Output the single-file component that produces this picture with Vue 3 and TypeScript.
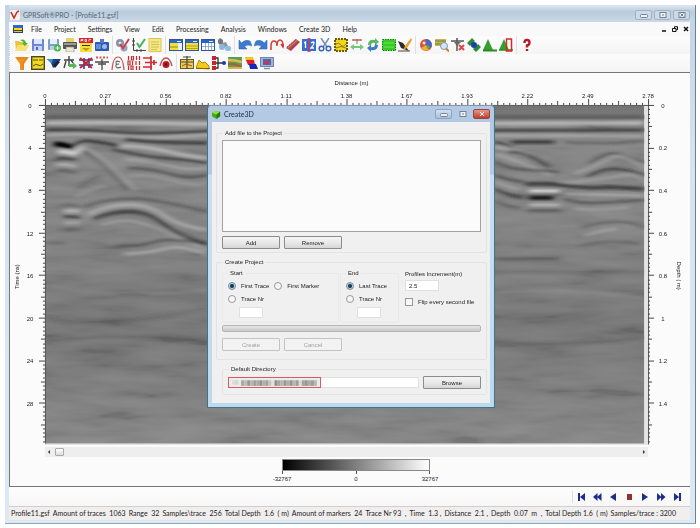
<script setup lang="ts">
import { ref } from 'vue'

interface Icon {
  name: string
  art: string
}

interface Echo {
  d: string
  w: number
  c: string
  o: number
}

const menus: string[] = ['File', 'Project', 'Settings', 'View', 'Edit', 'Processing', 'Analysis', 'Windows', 'Create 3D', 'Help']

const windowArt = (body: string): string =>
  `<rect x="0.5" y="1.5" width="13" height="11" fill="${body}" stroke="#2f5597"/><rect x="1" y="2" width="12" height="3" fill="#2b62c8"/><path d="M8 3.5h4" stroke="#dce8fb"/>`

const mainTools: Icon[][] = [
  [
    { name: 'Open', art: '<path d="M0 3h4l1 1h6v8H1z" fill="#e8c63c"/><path d="M3 7h11l-3 6H0z" fill="#f7e374"/><path d="M5 2q5-2 6 3h2l-3 3-3-3h2q-1-2-4-3z" fill="#4bb533"/>' },
    { name: 'Save', art: '<rect x="1" y="1" width="12" height="12" rx="1" fill="#6c86d6"/><rect x="3" y="1" width="8" height="5" fill="#dfe7fb"/><rect x="3" y="8" width="8" height="5" fill="#c9d4f4"/><rect x="5" y="9" width="2" height="3" fill="#4c65b4"/>' },
    { name: 'Save as', art: '<rect x="1" y="1" width="11" height="11" rx="1" fill="#7fa0c4"/><rect x="3" y="1" width="7" height="5" fill="#e7eff8"/><rect x="3" y="8" width="6" height="4" fill="#bccfe2"/><circle cx="10.5" cy="10" r="3.5" fill="#43b649"/><path d="M8.5 10h4M10.500 8v4" stroke="#fff"/>' },
    { name: 'Print', art: '<rect x="3" y="0" width="8" height="5" fill="#e7d36a"/><rect x="0" y="4" width="14" height="7" rx="1" fill="#555"/><rect x="1" y="5" width="12" height="2" fill="#999"/><rect x="3" y="9" width="8" height="5" fill="#e9e9d4" stroke="#777" stroke-width=".5"/>' },
    { name: 'Export PDF', art: '<rect x="1" y="4" width="12" height="10" fill="#f2df3a"/><rect x="0" y="0" width="14" height="5" fill="#d8232a"/><path d="M2 3.500V1.500h2v1h-2M6 1.500v2h1.500v-2zM10 3.500v-2h2" fill="none" stroke="#fff" stroke-width=".8"/><path d="M3 7.500h8" stroke="#333"/><path d="M3 10h8l-4 3z" fill="#c9971c"/>' },
    { name: 'Properties', art: '<rect x="0" y="4" width="14" height="9" rx="1" fill="#2d59b3"/><rect x="5" y="1" width="4" height="4" fill="#5379c7"/><rect x="1" y="6" width="5" height="5" fill="#5e8ce0"/><circle cx="9.500" cy="8.500" r="2.500" fill="#9fb9e9"/>' }
  ],
  [
    { name: 'Check settings', art: '<circle cx="4" cy="5" r="4" fill="#8592a8"/><circle cx="8" cy="10" r="3.500" fill="#9aa5b8"/><circle cx="4" cy="5" r="1.500" fill="#e7eaf0"/><path d="M4 6l3 4 6-9" fill="none" stroke="#c8404a" stroke-width="2"/>' },
    { name: 'Check axes', art: '<path d="M1.500 0v12.500H14M0 3h3M0 7h3M5 11v3M9 11v3" fill="none" stroke="#444"/><path d="M5 5l2.500 4L13 1" fill="none" stroke="#46b35a" stroke-width="2"/>' },
    { name: 'Notes', art: '<rect x="1" y="0.500" width="12" height="13" fill="#f4e984" stroke="#d8c64e"/><path d="M3 4h8M3 6.500h8M3 9h8M3 11.500h6" stroke="#c7b24a" stroke-width=".8"/>' }
  ],
  [
    { name: 'Profile window', art: windowArt('#f3df36') + '<rect x="9" y="5" width="4" height="7" fill="#e8eefb"/><path d="M1 9h8" stroke="#8a8a32"/>' },
    { name: 'Section window', art: windowArt('#f3df36') + '<path d="M1 8h12M1 10.500h12" stroke="#a18e1f" stroke-width=".8"/>' },
    { name: 'Table window', art: windowArt('#fff') + '<path d="M4.500 5v7M7.500 5v7M10.500 5v7M1 8.500h12" stroke="#7a9ad0" stroke-width=".8"/>' },
    { name: 'Batch', art: '<path d="M3 0l3 2v4l-3 1-2-2V2z" fill="#6f7881"/><path d="M5 5l4-1 2 4-4 2z" fill="#8c959e"/><circle cx="5" cy="9" r="3" fill="#8fb6d8"/><rect x="8" y="8" width="6" height="5" rx="2" fill="#86c0e6"/>' }
  ],
  [
    { name: 'Undo', art: '<path d="M1 2v9h8L6.500 8.500Q10 6 14 8L12 3Q7 1 3.500 5z" fill="#3c7bd0" stroke="#2a5da8" stroke-width=".5"/>' },
    { name: 'Redo', art: '<path d="M13 2v9H5l2.500-2.500Q4 6 0 8l2-5Q7 1 10.500 5z" fill="#3c7bd0" stroke="#2a5da8" stroke-width=".5"/>' },
    { name: 'Gain curve', art: '<path d="M1 12V8q0-5 3-5t3 5q0-6 3-6t3 6M11 6l2 3 1-3" fill="none" stroke="#d63a34" stroke-width="1.500"/>' },
    { name: 'Filter strip', art: '<path d="M0 10L10 1l4 3-9 9z" fill="#b8484a"/><path d="M2 10l9-7.500" stroke="#dba3a3" stroke-width=".8"/><path d="M4 12l9-8M1 9l9-8" stroke="#8a3032" stroke-width=".8" stroke-dasharray="1.500 1"/>' },
    { name: 'Renumber', art: '<rect x="0" y="1" width="14" height="12" fill="#2f6fd6"/><path d="M2 5l1.500-1v6M9 5q3-2 3 0T9 10h3" fill="none" stroke="#fff" stroke-width="1.300"/><path d="M7 0v14" stroke="#e5333b" stroke-width="1.500"/><path d="M5 0h4M5 14h4" stroke="#e5333b"/>' },
    { name: 'Cut', art: '<path d="M3 0l6 9M11 0L5 9" stroke="#7c93b8" stroke-width="1.600"/><circle cx="3.500" cy="10.500" r="2.300" fill="none" stroke="#3565bd" stroke-width="1.500"/><circle cx="10.500" cy="10.500" r="2.300" fill="none" stroke="#3565bd" stroke-width="1.500"/>' },
    { name: 'Crop profile', art: '<rect x="1" y="1" width="12" height="12" fill="#f0d818" stroke="#6b5b12" stroke-width="2" stroke-dasharray="2 1"/><path d="M2 6q3-2 5 1t5-1M2 10q5-3 10 0" fill="none" stroke="#8f7d10"/>' },
    { name: 'Stretch', art: '<path d="M0 9l4-3v2h6V6l4 3-4 3v-2H4v2z" fill="#78c67c"/><path d="M3 2h8M3 1v2M11 1v2" stroke="#de5656" stroke-width="1.300"/><path d="M7 1v5" stroke="#3a9a44"/>' },
    { name: 'Flip', art: '<path d="M2 7q0-6 7-5V0l4 4-4 3V5Q5 4 5 8z" fill="#5bb765"/><path d="M12 7q0 6-7 5v2l-4-4 4-3v2q4 1 4-3z" fill="#3d78c9"/>' },
    { name: 'Select area', art: '<rect x="0.500" y="1.500" width="13" height="11" fill="#35cc23" stroke="#12780a" stroke-dasharray="1.500 1"/><path d="M2 5h10M2 9h10" stroke="#6ce85c"/>' },
    { name: 'Edit trace', art: '<path d="M0 3l5 2 6 8-8-3z" fill="#2c2c2c"/><path d="M13 0L7 8l-2 4 4-2 5-8z" fill="#e9a02c"/><path d="M0 13h12" stroke="#444"/>' }
  ],
  [
    { name: 'Palette', art: '<circle cx="7" cy="7" r="6" fill="#d84c43"/><path d="M7 1a6 6 0 0 1 5 9L7 7z" fill="#4468c4"/><path d="M2 10a6 6 0 0 0 8 2L7 7z" fill="#e5b235"/><circle cx="5" cy="5" r="1.500" fill="#f5ead2"/><circle cx="9" cy="9" r="1.500" fill="#54b24c"/>' },
    { name: 'Zoom', art: '<rect x="0" y="1" width="11" height="7" fill="#c8b84a"/><path d="M0 3h11M0 6h11" stroke="#6e7c4d"/><circle cx="9" cy="8" r="3.500" fill="#cfe4f5" stroke="#8296ae"/><path d="M11 10.500l3 3" stroke="#b98a36" stroke-width="2"/>' },
    { name: 'Remove marker', art: '<path d="M0 3h13M6 0v13" stroke="#555" stroke-width="1.500"/><path d="M3 4h7L6 8z" fill="#666"/><path d="M8 7l5 5M13 7l-5 5" stroke="#dc4545" stroke-width="2"/>' },
    { name: 'GPS', art: '<path d="M0 5l5-5 3 3-5 5zM6 11l5-5 3 3-5 5z" fill="#268f36"/><circle cx="7" cy="7" r="3" fill="#1d3fa6"/>' },
    { name: 'Topography', art: '<path d="M0 12L5 1l5 11z" fill="#35a02e"/><path d="M0 12.500h14" stroke="#2b8a25" stroke-width="2"/>' },
    { name: 'Topography section', art: '<path d="M0 12L5 1l5 11z" fill="#35a02e"/><path d="M0 12h14" stroke="#2b8a25" stroke-width="1.500"/><rect x="7.500" y="1" width="5" height="12" fill="none" stroke="#d52b28" stroke-width="1.500"/>' }
  ],
  [{ name: 'Help', art: '<path d="M4.500 5q0-3 2.500-3t2.500 2.500T7 7.500V9.500M7 11v2" fill="none" stroke="#b71c24" stroke-width="2.400"/>' }]
]

const filterTools: Icon[][] = [
  [
    { name: 'Filter', art: '<path d="M0 1h14L9 8v6H5V8z" fill="#ef9220"/><path d="M2 2h10L8 7v6" fill="none" stroke="#d97a12" stroke-width=".8"/>' },
    { name: 'Processing flow', art: '<rect x="0.700" y="0.700" width="12.600" height="12.600" fill="#f0da22" stroke="#4a4820" stroke-width="1.400"/><path d="M2 4h5M2 10q3-3 5-1t5-1" fill="none" stroke="#5a5312"/><path d="M8 4h4" stroke="#a83b22"/>' },
    { name: 'Amplitude', art: '<path d="M0 3h14l-4 6-4 3-2-5z" fill="#1c3f92"/><path d="M0 3h6l-1 4z" fill="#2aa0c8"/><path d="M6 9l4-4 3 1-5 6z" fill="#1e2430"/>' },
    { name: 'Move start', art: '<path d="M1 4h10M6 0v10M3 5L1 12M8 4l2 3" stroke="#454545" stroke-width="1.400"/><path d="M6 8h4V6l4 4-4 3v-2H6z" fill="#57b751"/>' },
    { name: 'Remove background', art: '<path d="M0 4h14M0 9h14M5 2v11M10 2v10" stroke="#26359e" stroke-width="1.500"/><path d="M1 2l12 10M13 2L1 12" stroke="#cc2028" stroke-width="1.700"/>' },
    { name: 'Dewow', art: '<path d="M1 1.500h12" stroke="#d6544e" stroke-dasharray="2 1.500" stroke-width="2"/><path d="M0 6h14M7 3v11M3 8h8" stroke="#4b4b4b" stroke-width="1.300"/>' },
    { name: 'Hyperbola', art: '<path d="M1 14Q2 1 7 1t6 13" fill="none" stroke="#c9575a" stroke-width="1.200"/><path d="M9 6q-4-2-4 .5t3 1.500q-4 0-3 2.500t5 .5" fill="none" stroke="#666" stroke-width="1.100"/>' },
    { name: 'Binary', art: '<path d="M1.500 0v4M4.500 0v4h2V0zM9.500 0v4M12.500 0v4M1 5v4h2V5zM5.500 5v4M9 5v4M12.500 5v4M1.500 10v4M4 10v4h2v-4zM9.500 10v4M12.500 10v4" fill="none" stroke="#cb2a2c" stroke-width="1.200"/>' },
    { name: 'Traces', art: '<path d="M0 2h8M2 6.500h12M0 11h9M8 0v14M11 4v5" fill="none" stroke="#d22b2c" stroke-width="1.700"/>' },
    { name: 'Migration', art: '<path d="M1 10Q3 2 7 2t6 8" fill="none" stroke="#b4585c" stroke-width="1.400"/><circle cx="7" cy="8.500" r="3.500" fill="#c01820"/><circle cx="7" cy="8.500" r="1.200" fill="#5b0c10"/>' }
  ],
  [
    { name: 'Layer pick', art: '<rect x="0.500" y="3.500" width="13" height="9" fill="#e8cd56" stroke="#6d5a1d"/><path d="M1 6h12M7 0v13M3 1h8" stroke="#4a4a36" stroke-width="1.200"/><path d="M2 10l4-2 6 2" fill="none" stroke="#b14a22"/>' },
    { name: 'Horizon', art: '<path d="M0 12l3-8 3 3 3-1 4 4v3z" fill="#f3cb17" stroke="#b18a08"/><path d="M0 12.500h14" stroke="#85640e"/>' },
    { name: 'Flow chart', art: '<path d="M2 2h4v10H2M2 7h10" fill="none" stroke="#333" stroke-width="1.300"/><rect x="0" y="0" width="4" height="4" fill="#c8242c"/><rect x="0" y="5" width="4" height="4" fill="#c8242c"/><rect x="0" y="10" width="4" height="4" fill="#c8242c"/><circle cx="12" cy="7" r="2" fill="#2438a8"/>' },
    { name: 'Layers', art: '<rect x="0" y="1" width="14" height="12" fill="#5f9c57"/><path d="M0 4q7 0 14 2" fill="none" stroke="#d6c249" stroke-width="2.500"/><path d="M0 8q7-1 14 3" fill="none" stroke="#b9543e" stroke-width="1.800"/><path d="M0 12h14" stroke="#d4b548" stroke-width="2"/>' },
    { name: 'Slices', art: '<path d="M1 1h8l1 4H2z" fill="#f0c420"/><path d="M2 4h8l1 5H4z" fill="#d8202a"/><path d="M5 8h7l2 5H6z" fill="#1826b8"/>' },
    { name: 'Preview', art: '<rect x="0.500" y="1.500" width="13" height="9" fill="#9cb3da" stroke="#7085ad"/><rect x="3" y="3" width="8" height="6" fill="#4a69b4"/><path d="M7 9L4.500 6.500l1-2L7 5.500l1.500-1 1 2z" fill="#e52f36"/><path d="M4 12.500h6" stroke="#8493ab" stroke-width="1.500"/>' }
  ]
]

const players: Icon[] = [
  { name: 'First', art: '<path d="M2 1h2v8H2zM9 1v8L4 5z"/>' },
  { name: 'Fast backward', art: '<path d="M5.500 1v8L1 5zM9.500 1v8L5 5z"/>' },
  { name: 'Backward', art: '<path d="M8 1v8L2 5z"/>' },
  { name: 'Stop', art: '<rect x="3" y="2" width="5" height="6" fill="#94302e"/>' },
  { name: 'Forward', art: '<path d="M2 1v8l6-4z"/>' },
  { name: 'Fast forward', art: '<path d="M1 1v8l4.500-4zM5 1v8l4.500-4z"/>' },
  { name: 'Last', art: '<path d="M7 1h2v8H7zM2 1v8l5-4z"/>' }
]

const status: string[] = [
  'Profile11.gsf', 'Amount of traces  1063', 'Range  32', 'Samples\\trace  256', 'Total Depth  1.6  ( m)', 'Amount of markers  24',
  'Trace Nr 93  ,', 'Time  1.3 ,', 'Distance  2.1 ,', 'Depth  0.07  m  ,', 'Total Depth 1.6  ( m)', 'Samples/trace : 3200'
]

const distances: string[] = ['0', '0.27', '0.56', '0.82', '1.11', '1.38', '1.67', '1.93', '2.22', '2.49', '2.78']
const times: string[] = ['0', '4', '8', '12', '16', '20', '24', '28']
const depths: string[] = ['0', '0.2', '0.4', '0.6', '0.8', '1', '1.2', '1.4']

const xStep = 60.4
const yStep = 42.6

function tickLength(i: number): number {
  return i % 10 === 0 ? 6 : i % 5 === 0 ? 4 : 2
}

const topTicks: string = Array.from({ length: 101 }, (_, i) => `M${45.5 + Math.round((i * xStep) / 10)} 105v-${tickLength(i)}`).join('')
const leftTicks: string = Array.from({ length: 80 }, (_, i) => `M45 ${105.5 + Math.round((i * yStep) / 10)}h-${tickLength(i)}`).join('')
const rightTicks: string = Array.from({ length: 80 }, (_, i) => `M649 ${105.5 + Math.round((i * yStep) / 10)}h${tickLength(i)}`).join('')

// Reflections in the radargram, from the surface downwards.
const echoes: Echo[] = [
  { d: 'M45 117H645', w: 4, c: '#555', o: 0.7 },
  { d: 'M45 123Q120 122 210 124L645 123', w: 4, c: '#c8c8c8', o: 0.7 },
  { d: 'M45 130Q80 129 110 132T210 131L645 130', w: 3, c: '#303030', o: 0.75 },
  { d: 'M45 135Q90 133 120 136T210 135L645 136', w: 3, c: '#bbb', o: 0.6 },
  { d: 'M54 144Q65 144 72 148', w: 5, c: '#000', o: 1 },
  { d: 'M72 147Q80 140 90 141T120 146', w: 3, c: '#222', o: 0.75 },
  { d: 'M125 139Q160 143 208 143', w: 4, c: '#222', o: 0.65 },
  { d: 'M58 152Q66 151 74 154L82 147', w: 4, c: '#fff', o: 0.6 },
  { d: 'M56 159Q66 157 76 160', w: 3, c: '#222', o: 0.6 },
  { d: 'M56 165Q66 163 76 167', w: 3, c: '#ddd', o: 0.5 },
  { d: 'M56 171Q66 169 76 173', w: 3, c: '#444', o: 0.5 },
  { d: 'M82 145Q95 152 110 166T136 190', w: 3, c: '#ddd', o: 0.3 },
  { d: 'M84 151Q98 158 112 172T128 190', w: 3, c: '#333', o: 0.6 },
  { d: 'M120 146Q145 146 165 151T208 158', w: 4, c: '#ccc', o: 0.6 },
  { d: 'M112 149Q145 157 165 158T208 163', w: 3, c: '#333', o: 0.7 },
  { d: 'M125 159Q150 161 170 166T208 168', w: 3, c: '#bbb', o: 0.5 },
  { d: 'M128 168Q150 168 170 174T208 175', w: 3, c: '#333', o: 0.55 },
  { d: 'M128 176Q150 174 175 181T208 182', w: 3, c: '#aaa', o: 0.5 },
  { d: 'M78 189Q88 180 100 176', w: 3, c: '#444', o: 0.4 },
  { d: 'M76 197Q92 187 106 186', w: 3, c: '#bbb', o: 0.3 },
  { d: 'M84 207Q105 199 130 199T208 212', w: 3, c: '#333', o: 0.4 },
  { d: 'M88 214Q110 205 130 205T165 216T208 230', w: 4, c: '#ddd', o: 0.4 },
  { d: 'M94 219Q110 212 130 212T165 225T208 244', w: 4, c: '#222', o: 0.6 },
  { d: 'M102 225Q125 217 145 224T180 238T208 251', w: 3, c: '#ccc', o: 0.35 },
  { d: 'M62 206Q72 203 80 208', w: 3, c: '#444', o: 0.4 },
  { d: 'M64 211H80', w: 4, c: '#ddd', o: 0.5 },
  { d: 'M64 217Q72 216 80 218', w: 3, c: '#222', o: 0.65 },
  { d: 'M64 223H80', w: 3, c: '#ccc', o: 0.45 },
  { d: 'M64 230H80', w: 3, c: '#444', o: 0.35 },
  { d: 'M118 246Q140 247 155 242T208 245', w: 3, c: '#333', o: 0.5 },
  { d: 'M124 254Q145 254 165 249T208 256', w: 3, c: '#ddd', o: 0.4 },
  { d: 'M45 243H65', w: 3, c: '#444', o: 0.35 },
  { d: 'M495 142Q505 143 514 150', w: 3, c: '#222', o: 0.6 },
  { d: 'M512 142H555', w: 4, c: '#111', o: 0.6 },
  { d: 'M495 147Q512 148 530 155', w: 3, c: '#ccc', o: 0.55 },
  { d: 'M510 152Q520 151 532 157T550 167', w: 3, c: '#222', o: 0.6 },
  { d: 'M495 154Q510 158 528 165T550 176', w: 3, c: '#bbb', o: 0.5 },
  { d: 'M495 161Q506 168 520 169T560 172', w: 3, c: '#333', o: 0.5 },
  { d: 'M495 175Q508 180 524 182', w: 3, c: '#333', o: 0.6 },
  { d: 'M495 182Q508 186 520 190', w: 3, c: '#bbb', o: 0.5 },
  { d: 'M495 189Q510 196 524 198', w: 3, c: '#222', o: 0.6 },
  { d: 'M495 201Q508 207 520 208', w: 3, c: '#444', o: 0.5 },
  { d: 'M565 142Q600 145 645 141', w: 3, c: '#333', o: 0.35 },
  { d: 'M590 164Q608 151 618 154T645 163', w: 3, c: '#333', o: 0.5 },
  { d: 'M575 174Q600 165 612 158T645 169', w: 3, c: '#ccc', o: 0.4 },
  { d: 'M588 177Q604 168 618 169T645 176', w: 3, c: '#222', o: 0.55 },
  { d: 'M560 183Q600 180 620 176T645 182', w: 3, c: '#bbb', o: 0.4 },
  { d: 'M526 184Q550 183 570 186T610 187L645 189', w: 4, c: '#1a1a1a', o: 0.65 },
  { d: 'M530 191H560', w: 3, c: '#fff', o: 0.7 },
  { d: 'M565 194Q600 194 645 196', w: 3, c: '#ccc', o: 0.45 },
  { d: 'M530 198H554', w: 4, c: '#080808', o: 0.8 },
  { d: 'M530 205H560', w: 3, c: '#eee', o: 0.5 },
  { d: 'M565 199Q580 204 600 203T645 200', w: 3, c: '#333', o: 0.5 },
  { d: 'M528 211H562', w: 3, c: '#333', o: 0.45 },
  { d: 'M575 209Q605 211 630 207', w: 3, c: '#bbb', o: 0.4 },
  { d: 'M582 228Q600 222 618 222T645 228', w: 3, c: '#444', o: 0.4 },
  { d: 'M585 236Q600 231 618 229', w: 3, c: '#ccc', o: 0.35 },
  { d: 'M582 246Q605 239 640 244', w: 3, c: '#444', o: 0.35 },
  { d: 'M495 259H560', w: 3, c: '#333', o: 0.4 },
  { d: 'M495 272H645', w: 3, c: '#444', o: 0.2 },
  { d: 'M495 293Q560 288 645 298', w: 4, c: '#aaa', o: 0.2 },
  { d: 'M45 285Q120 300 208 290', w: 3, c: '#aaa', o: 0.2 },
  { d: 'M45 318Q110 330 208 308', w: 4, c: '#444', o: 0.2 },
  { d: 'M45 342Q120 332 208 342', w: 4, c: '#444', o: 0.25 },
  { d: 'M495 342Q560 348 645 338', w: 4, c: '#444', o: 0.25 }
]

// Shades of the obscured folder path.
const mosaic: string[] = [
  '#ddd', '#d3d3d3', '#e6e6e6', '#a9a9a9', '#bdbdbd', '#999', '#b5b5b5', '#9f9f9f', '#aaa', '#939393', '#b0b0b0', '#a0a0a0', '#c4c4c4',
  '#e0e0e0', '#8f8f8f', '#a5a5a5', '#b3b3b3', '#989898', '#aeaeae', '#959595', '#b7b7b7', '#9c9c9c', '#dadada', '#a2a2a2', '#979797', '#acacac', '#9d9d9d', '#b9b9b9'
]

const startMode = ref<string>('trace')
const endMode = ref<string>('trace')
const increment = ref<string>('2.5')
const flip = ref<boolean>(false)
const startTrace = ref<string>('')
const endTrace = ref<string>('')
const directory = ref<string>('')
</script>

<template>
  <main class="app">
    <header class="titlebar">
      <svg class="logo" viewBox="0 0 10 10" aria-hidden="true">
        <rect width="10" height="10" rx="1" fill="#f7f0ee" />
        <path d="M1 2l3 6 3-6M7 2l2-1" fill="none" stroke="#c6282c" stroke-width="1.600" />
      </svg>
      <h1>GPRSoft®PRO - [Profile11.gsf]</h1>
      <div class="caption">
        <button aria-label="Minimize"><svg viewBox="0 0 8 6"><rect x="0.500" y="2.500" width="7" height="3" rx="1" /></svg></button>
        <button aria-label="Maximize"><svg viewBox="0 0 8 6"><rect x="1" y="0.500" width="6" height="5" /><path d="M3 3h2" /></svg></button>
        <button aria-label="Close"><svg viewBox="0 0 8 6"><rect x="1" y="0.500" width="6" height="5" /><path d="M2.500 1.500l3 3M5.500 1.500l-3 3" /></svg></button>
      </div>
    </header>

    <nav class="menubar">
      <svg class="doc" viewBox="0 0 10 8" aria-hidden="true">
        <rect width="10" height="8" fill="#3d3d55" />
        <rect width="10" height="3" fill="#2d66cf" />
        <rect x="1" y="3" width="8" height="2" fill="#f1da28" />
        <rect x="1" y="6" width="8" height="1" fill="#e3c81e" />
      </svg>
      <button v-for="m in menus" :key="m">{{ m }}</button>
      <div class="mdi">
        <button aria-label="Minimize document"><svg viewBox="0 0 6 6"><path d="M1 5h4" stroke-width="1.500" /></svg></button>
        <button aria-label="Restore document"><svg viewBox="0 0 6 6"><path d="M2.500 2V.7h3v3H4M.5 2.500h3.500v3H.5z" /></svg></button>
        <button aria-label="Close document"><svg viewBox="0 0 6 6"><path d="M1 1l4 4M5 1L1 5" stroke-width="1.500" /></svg></button>
      </div>
    </nav>

    <div v-for="(bar, b) in [mainTools, filterTools]" :key="b" class="toolbar">
      <div v-for="(group, g) in bar" :key="g" class="group">
        <button v-for="t in group" :key="t.name" :aria-label="t.name">
          <svg viewBox="0 0 14 14" v-html="t.art"></svg>
        </button>
      </div>
    </div>

    <section class="document">
      <svg class="chart" viewBox="10 73 681 373" role="img" aria-label="Radargram">
        <defs>
          <linearGradient id="ground" x1="0" y1="0" x2="0" y2="1">
            <stop offset="0" stop-color="#747474" />
            <stop offset="0.080" stop-color="#828282" />
            <stop offset="0.400" stop-color="#7e7e7e" />
            <stop offset="0.650" stop-color="#717171" />
            <stop offset="1" stop-color="#838383" />
          </linearGradient>
          <filter id="soft" x="-5%" y="-5%" width="110%" height="110%"><feGaussianBlur stdDeviation="3 1" /></filter>
          <filter id="strata" x="0" y="0" width="100%" height="100%">
            <feTurbulence type="fractalNoise" baseFrequency="0.014 0.080" numOctaves="3" seed="7" />
            <feColorMatrix values="1.600 0 0 0 -0.350  1.600 0 0 0 -0.350  1.600 0 0 0 -0.350  0 0 0 0 1" />
          </filter>
          <clipPath id="plot"><rect x="45" y="106" width="600" height="338" /></clipPath>
        </defs>
        <rect x="45" y="106" width="604" height="340" fill="#e4e4e4" />
        <rect x="45" y="106" width="600" height="338" fill="url(#ground)" />
        <g clip-path="url(#plot)">
          <rect x="45" y="120" width="600" height="324" filter="url(#strata)" opacity="0.100" />
          <g filter="url(#soft)" fill="none">
            <path v-for="(e, i) in echoes" :key="i" :d="e.d" :stroke="e.c" :stroke-width="e.w" :opacity="e.o" />
          </g>
        </g>
        <path d="M45.500 105v339M45 105.500h605M649.500 105v340" fill="none" stroke="#555" />
        <path :d="topTicks + leftTicks + rightTicks" fill="none" stroke="#444" />
        <g text-anchor="middle">
          <text x="352" y="85.500">Distance (m)</text>
          <text v-for="(d, i) in distances" :key="d" :x="45 + i * xStep" y="98">{{ d }}</text>
          <text transform="translate(19 277) rotate(-90)">Time (ns)</text>
          <text transform="translate(678 276) rotate(90)">Depth ( m)</text>
          <text v-for="(t, i) in times" :key="'t' + t" x="30" :y="108 + i * yStep">{{ t }}</text>
          <text v-for="(d, i) in depths" :key="'d' + d" x="664" :y="108 + i * yStep">{{ d }}</text>
        </g>
      </svg>

      <div class="scroll">
        <button aria-label="Scroll left"><svg viewBox="0 0 8 8"><path d="M5 2v4L3 4z" /></svg></button>
        <span class="thumb"></span>
        <button aria-label="Scroll right"><svg viewBox="0 0 8 8"><path d="M3 2v4l2-2z" /></svg></button>
      </div>

      <div class="scale">
        <div class="ramp"></div>
        <div class="marks"><i></i><i></i><i></i></div>
        <div class="values"><span>-32767</span><span>0</span><span>32767</span></div>
      </div>
    </section>

    <div class="playback">
      <button v-for="p in players" :key="p.name" :aria-label="p.name">
        <svg viewBox="0 0 11 10" v-html="p.art"></svg>
      </button>
    </div>

    <footer class="status">
      <span v-for="(s, i) in status" :key="i">{{ s }}</span>
    </footer>

    <div class="dialog" role="dialog" aria-labelledby="dialog-title">
      <header class="dialog-bar">
        <svg class="cube" viewBox="0 0 10 10" aria-hidden="true">
          <path d="M0 3l4-2 5 1v5L5 10 0 7z" fill="#3fae17" />
          <path d="M0 3l4-2 5 1-4 3z" fill="#8ee03c" />
          <path d="M5 5l4-3v5l-4 3z" fill="#2a7a10" />
        </svg>
        <h2 id="dialog-title">Create3D</h2>
        <div class="caption">
          <button aria-label="Minimize dialog"><svg viewBox="0 0 8 6"><rect x="0.500" y="2.500" width="7" height="3" rx="1" /></svg></button>
          <button class="dim" aria-label="Maximize dialog"><svg viewBox="0 0 8 6"><rect x="1" y="0.500" width="6" height="5" /><path d="M3 3h2" /></svg></button>
          <button class="close" aria-label="Close dialog"><svg viewBox="0 0 8 6"><path d="M2 1l4 4M6 1L2 5" /></svg></button>
        </div>
      </header>

      <form class="dialog-body" @submit.prevent>
        <fieldset class="files">
          <legend>Add file to the Project</legend>
          <select class="list" size="4" aria-label="Project files"></select>
          <div class="actions">
            <button class="btn" type="button">Add</button>
            <button class="btn" type="button">Remove</button>
          </div>
        </fieldset>

        <fieldset class="project">
          <legend>Create Project</legend>
          <div class="options">
            <fieldset class="range">
              <legend>Start</legend>
              <div class="line">
                <label><input v-model="startMode" type="radio" name="start" value="trace" />First Trace</label>
                <label><input v-model="startMode" type="radio" name="start" value="marker" />First Marker</label>
              </div>
              <div class="line">
                <label><input v-model="startMode" type="radio" name="start" value="nr" />Trace Nr</label>
              </div>
              <input v-model="startTrace" class="nr" type="text" aria-label="Start trace number" />
            </fieldset>
            <fieldset class="range">
              <legend>End</legend>
              <div class="line">
                <label><input v-model="endMode" type="radio" name="end" value="trace" />Last Trace</label>
              </div>
              <div class="line">
                <label><input v-model="endMode" type="radio" name="end" value="nr" />Trace Nr</label>
              </div>
              <input v-model="endTrace" class="nr" type="text" aria-label="End trace number" />
            </fieldset>
            <div class="increment">
              <label for="increment">Profiles Increment(m)</label>
              <input id="increment" v-model="increment" type="text" />
              <label class="check"><input v-model="flip" type="checkbox" />Flip every second file</label>
            </div>
          </div>
          <div class="progress" role="progressbar" aria-label="Progress" aria-valuenow="0"></div>
          <div class="actions">
            <button class="btn" type="button" disabled>Create</button>
            <button class="btn" type="button" disabled>Cancel</button>
          </div>
        </fieldset>

        <fieldset class="directory">
          <legend><label for="directory">Default Directory</label></legend>
          <div class="path">
            <div class="field">
              <input id="directory" v-model="directory" type="text" />
              <div class="hidden-path">
                <svg viewBox="0 0 90 8" preserveAspectRatio="none" aria-hidden="true">
                  <rect v-for="(c, i) in mosaic" :key="i" :x="i * 3 + 3" y="2" width="3" :height="i < 3 ? 4 : 5" :fill="c" />
                </svg>
              </div>
            </div>
            <button class="btn" type="button">Browse</button>
          </div>
        </fieldset>
      </form>
    </div>
  </main>
</template>

<style>
html,
body {
  background: #fff;
}
</style>

<style scoped>
* {
  box-sizing: border-box;
}

.app {
  position: relative;
  display: flex;
  flex-direction: column;
  margin: 5px 4px 4px 5px;
  min-height: calc(100vh - 9px);
  padding: 0 5px 3px 4px;
  border-right: 1px solid #6d7f92;
  border-bottom: 1px solid #8fa3b8;
  background: linear-gradient(#c3d3e3, #d6e3ef 30%, #dce8f3);
  font: 7px/10px Lato, "Open Sans", sans-serif;
  color: #222;
}

button {
  display: flex;
  align-items: center;
  justify-content: center;
  margin: 0;
  padding: 0;
  border: 0;
  background: none;
  font: inherit;
  color: inherit;
}

h1,
h2 {
  flex: 1;
  margin: 0;
  font: inherit;
}

.titlebar {
  display: flex;
  align-items: center;
  gap: 3px;
  height: 17px;
  margin: 0 -5px 0 0;
  padding: 3px 5px 0 1px;
  background: linear-gradient(#dfe8f1, #b9cbdc 40%, #cbd9e7);
  color: #5c6772;
}

.logo {
  width: 10px;
  height: 10px;
}

.caption {
  display: flex;
  gap: 2px;
}

.caption button {
  width: 17px;
  height: 10px;
  border: 1px solid #a3b3c4;
  border-radius: 2px;
  background: #ccd9e6;
}

.caption svg {
  width: 8px;
  height: 6px;
  fill: #edf2f7;
  stroke: #75818e;
}

.menubar {
  display: flex;
  align-items: center;
  gap: 12px;
  height: 14px;
  padding: 0 1px 0 4px;
  background: #f9f9fa;
}

.doc {
  width: 10px;
  height: 8px;
  margin-right: -4px;
}

.mdi {
  display: flex;
  gap: 5px;
  margin-left: auto;
}

.mdi svg {
  width: 6px;
  height: 6px;
  fill: none;
  stroke: #111;
}

.toolbar {
  display: flex;
  height: 18px;
  padding-left: 4px;
  border-left: 1px dotted #d0d0d0;
  background: linear-gradient(#fcfcfc, #f5f5f5);
}

.group {
  display: flex;
}

.group + .group {
  margin-left: 2px;
  padding-left: 2px;
  border-left: 1px solid #e0e0e0;
}

.group button {
  width: 16px;
}

.group svg {
  width: 14px;
  height: 14px;
}

.document {
  flex: 1;
  border: 1px solid #777;
  border-width: 1px 0 1px 1px;
  background: #fbfbfb;
}

.chart {
  display: block;
  width: 100%;
}

.chart text {
  font: 6px "Liberation Sans", Arial, sans-serif;
  fill: #222;
}

.scroll {
  display: flex;
  align-items: center;
  height: 10px;
  margin: 2px 42px 0 35px;
  background: #eee;
}

.scroll button:last-child {
  margin-left: auto;
}

.scroll svg {
  width: 8px;
  height: 8px;
  fill: #333;
}

.thumb {
  width: 9px;
  height: 8px;
  margin-left: 2px;
  border: 1px solid #aaa;
  border-radius: 1px;
  background: linear-gradient(#fff, #ddd);
}

.scale {
  width: 148px;
  margin: 2px 0 0 calc(50% - 68px);
  padding-bottom: 2px;
  color: #222;
  font: 6px/8px "Liberation Sans", Arial, sans-serif;
}

.ramp {
  height: 12px;
  border: 1px solid #888;
  background: linear-gradient(90deg, #000, #fff);
}

.marks,
.values {
  display: flex;
  justify-content: space-between;
}

.marks i {
  width: 1px;
  height: 3px;
  background: #555;
}

.values {
  margin: 1px -10px 0;
}

.values span {
  width: 20px;
  text-align: center;
}

.playback {
  display: flex;
  justify-content: flex-end;
  height: 19px;
  padding: 4px 5px 3px 0;
  background: linear-gradient(#fdfdfd, #f7f7f7);
}

.playback button {
  width: 16px;
}

.playback button:first-child {
  width: 17px;
  border-left: 1px solid #ddd;
}

.playback svg {
  width: 11px;
  height: 10px;
  fill: #1d2d8c;
}

.status {
  display: flex;
  justify-content: space-between;
  height: 14px;
  padding: 0 14px 0 2px;
  border-top: 1px solid #d3cdcd;
  background: #f1eeee;
  line-height: 13px;
  white-space: pre;
}

.dialog {
  position: absolute;
  top: 100px;
  left: calc(50% - 143px);
  width: 288px;
  padding: 0 4px 4px;
  border: 1px solid #3f7486;
  border-top-color: #7f97b2;
  border-radius: 4px 4px 0 0;
  background: linear-gradient(#b4cae4, #b4cae4 68px, #c9def2 69px, #bcd9ee);
  font: 6px/8px "Liberation Sans", Arial, sans-serif;
}

.dialog-bar {
  display: flex;
  align-items: center;
  gap: 3px;
  height: 16px;
  color: #1c2e44;
  font: 7px/8px Lato, "Open Sans", sans-serif;
}

.cube {
  width: 9px;
  height: 9px;
}

.dialog-bar .caption button {
  border-color: #8ba4c0;
  background: linear-gradient(#d3e1f0, #a8c0dc);
}

.dialog-bar .caption .dim {
  border-color: transparent;
  background: none;
}

.dialog-bar .caption .close {
  border-color: #93463f;
  background: linear-gradient(#e39a8c, #c23c2c);
}

.close svg {
  stroke: #fff;
}

.dialog-body {
  padding: 7px 3px 8px 4px;
  background: #f0f0f0;
}

fieldset {
  min-width: 0;
  margin: 0;
  padding: 3px 5px;
  border: 1px solid #e3e3e3;
  border-radius: 2px;
}

legend {
  height: 8px;
  margin-left: 1px;
  padding: 0 2px;
}

.list {
  display: block;
  width: 100%;
  height: 92px;
  border: 1px solid #a3a3a3;
  border-radius: 0;
  background: #fbfbfb;
}

.actions {
  display: flex;
  gap: 4px;
  margin-top: 4px;
}

.btn {
  width: 58px;
  height: 13px;
  border: 1px solid #8c8c8c;
  border-radius: 1px;
  background: linear-gradient(#f4f4f4, #e9e9e9 50%, #d6d6d6);
}

.btn:disabled {
  border-color: #c3c3c3;
  background: #f2f2f2;
  color: #a0a0a0;
}

.project {
  margin-top: 5px;
  padding: 3px 5px 8px;
}

.options {
  display: grid;
  grid-template-columns: 117px 59px 1fr;
  gap: 1px;
}

.range {
  padding: 2px 5px 4px;
  border-color: #e9e9e9;
}

.range legend {
  margin-left: 0;
}

.line {
  display: flex;
  gap: 5px;
}

.line label,
.check {
  display: flex;
  align-items: center;
  gap: 5px;
  height: 13px;
  white-space: nowrap;
}

input {
  margin: 0;
  font: inherit;
  color: inherit;
}

input[type='text'] {
  display: block;
  height: 11px;
  padding: 0 3px;
  border: 1px solid #e0e0e0;
  background: #fff;
}

input[type='radio'],
input[type='checkbox'] {
  appearance: none;
  width: 8px;
  height: 8px;
  border: 1px solid #999;
  background: #f7f7f7;
}

input[type='radio'] {
  border-radius: 50%;
}

input[type='radio']:checked {
  border-color: #7b8b98;
  background: radial-gradient(circle, #123b5c 0 35%, #b8d3e6 60%);
}

input[type='checkbox']:checked {
  background: #3c6d92;
}

.range .nr {
  width: 24px;
  margin: 2px 0 0 11px;
}

.increment label {
  display: block;
  white-space: nowrap;
}

.increment {
  padding: 1px 0 0 5px;
}

.increment > input {
  width: 34px;
  margin: 2px 0 4px;
}

.increment .check {
  display: flex;
}

.progress {
  height: 7px;
  margin-top: 2px;
  border: 1px solid #b5b5b5;
  border-radius: 2px;
  background: linear-gradient(#e6e6e6, #c9c9c9);
}

.project .actions {
  margin-top: 6px;
}

.directory {
  margin-top: 5px;
  margin-left: 6px;
  padding: 3px 5px 5px;
}

.path {
  display: flex;
  align-items: center;
  gap: 4px;
}

.field {
  position: relative;
  flex: 1;
}

.field input {
  width: 100%;
}

.hidden-path {
  position: absolute;
  inset: 0 auto 0 0;
  width: 93px;
  border: 1px solid #dd5a5a;
  background: #ececec;
}

.hidden-path svg {
  display: block;
  width: 100%;
  height: 100%;
}
</style>
